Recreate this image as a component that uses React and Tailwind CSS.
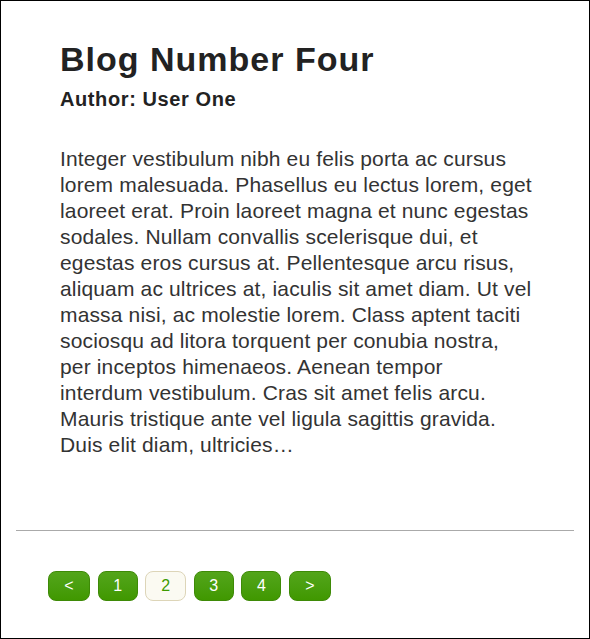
export default function App() {
  const pages = ['<', '1', '2', '3', '4', '>'];
  const lines = [
    'Integer vestibulum nibh eu felis porta ac cursus',
    'lorem malesuada. Phasellus eu lectus lorem, eget',
    'laoreet erat. Proin laoreet magna et nunc egestas',
    'sodales. Nullam convallis scelerisque dui, et',
    'egestas eros cursus at. Pellentesque arcu risus,',
    'aliquam ac ultrices at, iaculis sit amet diam. Ut vel',
    'massa nisi, ac molestie lorem. Class aptent taciti',
    'sociosqu ad litora torquent per conubia nostra,',
    'per inceptos himenaeos. Aenean tempor',
    'interdum vestibulum. Cras sit amet felis arcu.',
    'Mauris tristique ante vel ligula sagittis gravida.',
    'Duis elit diam, ultricies…',
  ];
  return (
    <div className="w-[590px] h-[639px] border border-black bg-white font-['Liberation_Sans',Arial,sans-serif] text-[#222]">
      <div className="pl-[59px] pr-[40px] pt-[38px]">
        <h1 className="text-[34px] leading-[40px] font-bold tracking-[1px]">Blog Number Four</h1>
        <h2 className="text-[20px] leading-[24px] font-bold mt-[8px] tracking-[0.6px]">Author: User One</h2>
        <p className="text-[21px] leading-[26px] mt-[35px] tracking-[0.15px] text-[#333]">
          {lines.map((l) => (
            <span key={l} className="block whitespace-nowrap">
              {l}
            </span>
          ))}
        </p>
      </div>
      <hr className="mx-[15px] mt-[72px] border-t border-[#aaa]" />
      <div className="flex gap-[7.6px] pl-[47px] mt-[40px]">
        {pages.map((p) => (
          <button
            key={p}
            className={
              p === '2'
                ? 'w-[41px] h-[30px] rounded-[8px] border border-[#ddd5b8] bg-[#fbfaf2] text-[#3d9a00] text-[16px]'
                : 'h-[30px] rounded-[8px] border border-[#3e8a07] bg-gradient-to-b from-[#53a51a] to-[#409800] text-white text-[16px] ' +
                  (p === '<' || p === '>' ? 'w-[42px]' : 'w-[40px]')
            }
          >
            {p}
          </button>
        ))}
      </div>
    </div>
  );
}
